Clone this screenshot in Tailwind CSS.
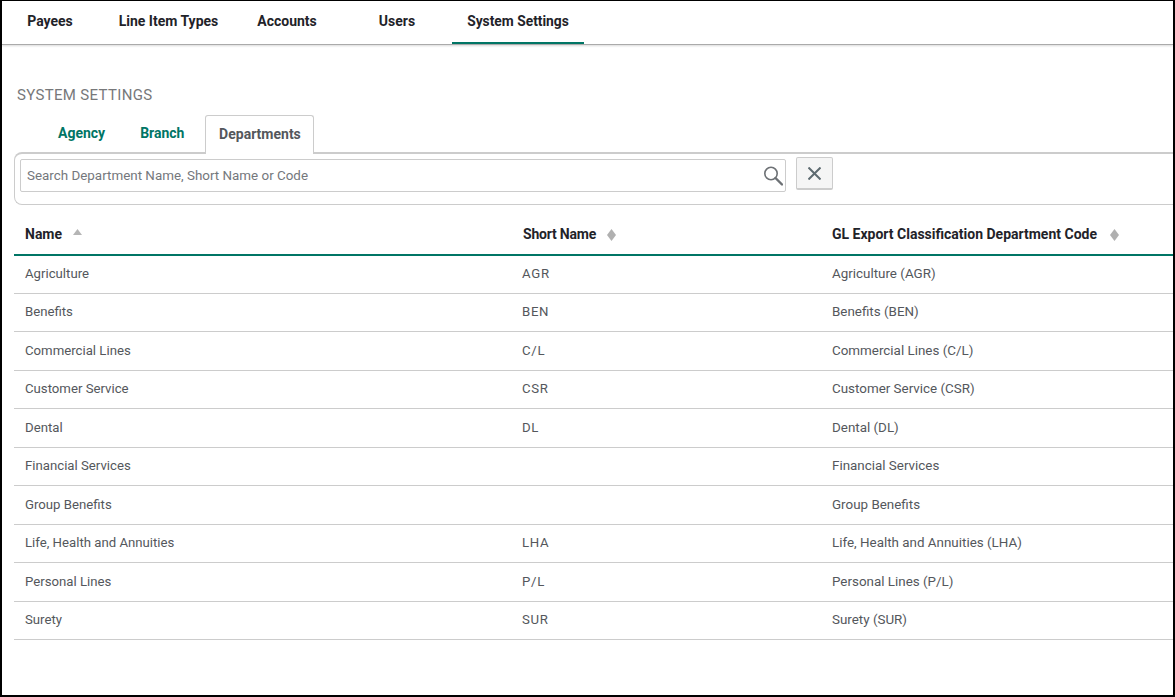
<!DOCTYPE html>
<html lang="en">
<head>
  <meta charset="UTF-8">
  <title>System Settings</title>
  <script src="https://cdn.jsdelivr.net/npm/@tailwindcss/browser@4"></script>
</head>
<body class="bg-white">
  <div class="h-[697px] w-[1175px] overflow-hidden border-t border-l-2 border-r-2 border-b-2 border-black bg-white font-['Roboto','Liberation_Sans',sans-serif]">
    <!-- top nav -->
    <nav class="flex h-[44px] border-b border-[#aaa] shadow-[0_1px_2px_rgba(0,0,0,0.15)] text-[14px] font-bold text-[#1f2329]">
      <a class="flex w-[96px] items-center justify-center pb-[2px]">Payees</a>
      <a class="ml-[7px] flex w-[127px] items-center justify-center pb-[2px]">Line Item Types</a>
      <a class="flex w-[110px] items-center justify-center pb-[2px]">Accounts</a>
      <a class="flex w-[110px] items-center justify-center pb-[2px]">Users</a>
      <a class="flex w-[132px] items-center justify-center border-b-2 border-[#007565] text-[13.8px]">System Settings</a>
    </nav>

    <main class="pl-[12px]">
      <h1 class="mt-[41px] ml-[3px] text-[15px] leading-[18px] tracking-[0.33px] text-[#77787a]">SYSTEM SETTINGS</h1>

      <!-- tabs -->
      <div class="mt-[11px] flex h-[37px] text-[14px] font-bold">
        <a class="ml-[44px] flex items-center text-[#007565]">Agency</a>
        <a class="ml-[35px] flex items-center text-[#007565]">Branch</a>
        <a class="relative z-10 ml-[21px] flex h-[39px] w-[109px] items-center justify-center rounded-t-[3px] border border-b-0 border-[#ccc] bg-white pb-[2px] text-[#54575c]">Departments</a>
      </div>

      <!-- search -->
      <div class="flex h-[53px] items-start gap-[10px] rounded-bl-[8px] rounded-tl-[8px] border-t-2 border-b border-l border-[#ccc] pl-[5px] pt-[3px]">
        <div class="mt-[2px] flex h-[33px] w-[766px] items-center justify-between rounded-[2px] border border-[#ccc] pl-[6px] pr-[2px]">
          <span class="pt-[1px] text-[13.4px] text-[#74777c]">Search Department Name, Short Name or Code</span>
          <svg class="h-[20px] w-[20px]" viewBox="0 0 20 20" fill="none" stroke="#6d7175">
            <circle cx="8" cy="7.5" r="6.2" stroke-width="1.6"/>
            <path d="M12.5 12l6.5 6.5" stroke-width="2.4" stroke-linecap="round"/>
          </svg>
        </div>
        <button class="flex h-[33px] w-[37px] items-center justify-center rounded-[2px] border border-[#ccc] border-b-2 bg-[#f5f5f5]">
          <svg class="h-[13px] w-[13px]" viewBox="0 0 13 13" fill="none" stroke="#5d6a70" stroke-width="2">
            <path d="M0.5 0.5l12 12M12.5 0.5l-12 12"/>
          </svg>
        </button>
      </div>

      <!-- table -->
      <div class="text-[13.2px] text-[#54575c]">
        <div class="grid h-[51px] grid-cols-[497px_310px_1fr] items-center border-b-2 border-[#007565] pl-[11px] pt-[10px] text-[14px] font-bold text-[#1f2329]">
          <div class="flex items-center">Name
            <svg class="ml-[11px] mb-[6px] h-[6px] w-[9px]" viewBox="0 0 9 6"><path d="M4.5 0L9 6H0z" fill="#b5b5b5"/></svg>
          </div>
          <div class="flex items-center pl-[1px] tracking-[-0.2px]">Short Name
            <svg class="ml-[11px] h-[12px] w-[9px]" viewBox="0 0 9 12"><path d="M4.5 0L9 6L4.5 12L0 6z" fill="#b0b0b0"/></svg>
          </div>
          <div class="flex items-center">GL Export Classification Department Code
            <svg class="ml-[13px] h-[12px] w-[9px]" viewBox="0 0 9 12"><path d="M4.5 0L9 6L4.5 12L0 6z" fill="#b0b0b0"/></svg>
          </div>
        </div>
        <div class="grid h-[37.5px] grid-cols-[497px_310px_1fr] items-center border-b border-[#ccc] pl-[11px]"><div>Agriculture</div><div class="tracking-[0.7px]">AGR</div><div class="text-[13.4px]">Agriculture (AGR)</div></div>
        <div class="grid h-[38.5px] grid-cols-[497px_310px_1fr] items-center border-b border-[#ccc] pl-[11px]"><div>Benefits</div><div class="tracking-[0.7px]">BEN</div><div class="text-[13.4px]">Benefits (BEN)</div></div>
        <div class="grid h-[38.5px] grid-cols-[497px_310px_1fr] items-center border-b border-[#ccc] pl-[11px]"><div>Commercial Lines</div><div class="tracking-[0.7px]">C/L</div><div class="text-[13.4px]">Commercial Lines (C/L)</div></div>
        <div class="grid h-[38.5px] grid-cols-[497px_310px_1fr] items-center border-b border-[#ccc] pl-[11px]"><div>Customer Service</div><div class="tracking-[0.7px]">CSR</div><div class="text-[13.4px]">Customer Service (CSR)</div></div>
        <div class="grid h-[38.5px] grid-cols-[497px_310px_1fr] items-center border-b border-[#ccc] pl-[11px]"><div>Dental</div><div class="tracking-[0.7px]">DL</div><div class="text-[13.4px]">Dental (DL)</div></div>
        <div class="grid h-[38.5px] grid-cols-[497px_310px_1fr] items-center border-b border-[#ccc] pl-[11px]"><div>Financial Services</div><div></div><div class="text-[13.4px]">Financial Services</div></div>
        <div class="grid h-[38.5px] grid-cols-[497px_310px_1fr] items-center border-b border-[#ccc] pl-[11px]"><div>Group Benefits</div><div></div><div class="text-[13.4px]">Group Benefits</div></div>
        <div class="grid h-[38.5px] grid-cols-[497px_310px_1fr] items-center border-b border-[#ccc] pl-[11px]"><div>Life, Health and Annuities</div><div class="tracking-[0.7px]">LHA</div><div class="text-[13.4px]">Life, Health and Annuities (LHA)</div></div>
        <div class="grid h-[38.5px] grid-cols-[497px_310px_1fr] items-center border-b border-[#ccc] pl-[11px]"><div>Personal Lines</div><div class="tracking-[0.7px]">P/L</div><div class="text-[13.4px]">Personal Lines (P/L)</div></div>
        <div class="grid h-[38.5px] grid-cols-[497px_310px_1fr] items-center border-b border-[#ccc] pl-[11px]"><div>Surety</div><div class="tracking-[0.7px]">SUR</div><div class="text-[13.4px]">Surety (SUR)</div></div>
      </div>
    </main>
  </div>
</body>
</html>
